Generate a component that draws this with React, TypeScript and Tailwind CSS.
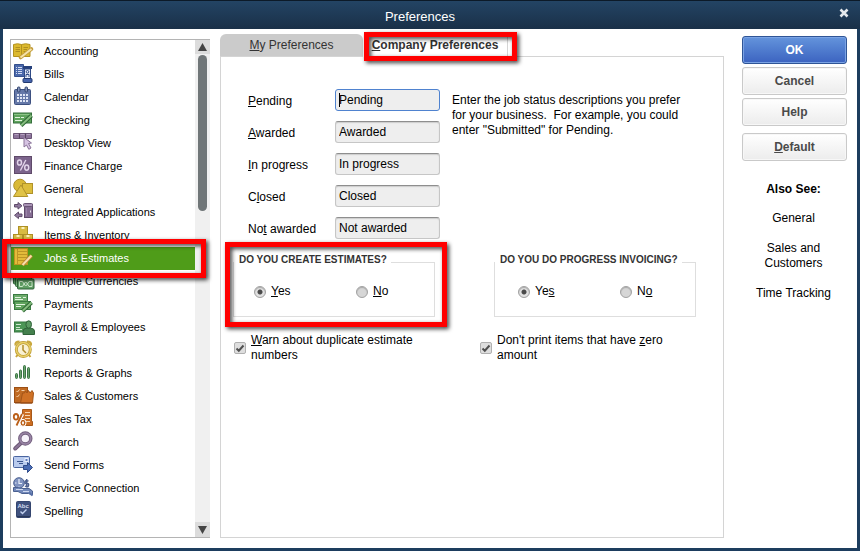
import { useState } from "react";
import type { ReactNode } from "react";

interface IconProps {
    children: ReactNode
}

function Icon(props: IconProps) {
    return (
        <svg viewBox="0 0 23 23" className="w-[23px] h-[23px] shrink-0" aria-hidden="true">
            {props.children}
        </svg>
    );
}

const icons: Record<string, ReactNode> = {
    accounting: (
        <>
            <path d="M1.5 4.5q4-1.5 8 0q4-1.5 8.5 0v12h-16.500z" fill="#dcb92f" stroke="#b3921f" />
            <path d="M9.5 4.500v12" stroke="#b3921f" />
            <path d="M3.500 7.500h4.500M3.500 9.500h4.500M3.500 11.500h4.500M11.500 7.500h4.500M11.500 9.500h3.500M11.500 11.500h2" stroke="#b08f20" />
            <path d="M19.500 9L8.500 17.500" stroke="#c39d3c" strokeWidth="3.600" strokeLinecap="round" />
            <path d="M19.500 9L8.500 17.500" stroke="#f5e3a8" strokeWidth="2" />
        </>
    ),
    bills: (
        <>
            <path d="M2.500 1.500h9v2h7v9h-5v1h-11z" fill="#4b69ab" stroke="#35508e" />
            <path d="M4 4.500h1M6 4.500h4M4 6.500h1M6 6.500h4M4 8.500h1M6 8.500h4M4 10.500h1M6 10.500h4" stroke="#d3dcf2" />
            <rect x="11" y="3" width="9" height="3" fill="#27417c" />
            <rect x="12.500" y="6" width="6" height="9.500" fill="#e6ecf8" stroke="#2f4a86" />
            <circle cx="15.500" cy="8.800" r="1.300" fill="none" stroke="#2f4a86" />
            <path d="M14 14v-2.500h3V14" fill="none" stroke="#2f4a86" />
            <rect x="11" y="15.500" width="9" height="4" rx="1" fill="#4664ac" stroke="#22396e" />
        </>
    ),
    calendar: (
        <>
            <rect x="2.500" y="3.500" width="16" height="15" rx="1" fill="#6578a8" stroke="#3d5080" />
            <rect x="5.500" y="1" width="2.500" height="5" rx="1" fill="#8595bd" stroke="#35476f" />
            <rect x="13" y="1" width="2.500" height="5" rx="1" fill="#8595bd" stroke="#35476f" />
            <path d="M5 9h12M5 12h12M5 15h12" stroke="#dfe5f4" strokeWidth="2" strokeDasharray="2 1" />
        </>
    ),
    checking: (
        <>
            <rect x="1.500" y="4" width="18" height="10" fill="#5fa35d" stroke="#356f3c" />
            <path d="M2 5.500h17" stroke="#8cc487" />
            <path d="M3 8.500h5M9 8.500h3M3 11.500h7" stroke="#e2f3df" />
            <path d="M19.500 6.500L9 16.500" stroke="#2c6634" strokeWidth="4" />
            <path d="M19.500 6.500L9 16.500" stroke="#86bd7e" strokeWidth="2" />
        </>
    ),
    desktop: (
        <>
            <path d="M1.500 1.500h18v5h-18z" fill="#8c749a" stroke="#6a5476" />
            <path d="M7.500 1.500v5M13.500 1.500v5" stroke="#57435f" />
            <path d="M2.500 2.500h4M8.500 2.500h4M14.500 2.500h4" stroke="#b5a1c0" />
            <path d="M12 5.500l7.500 5.500-3 .5 2.500 4.500-2.200 1.300-2.300-4.300L12 15z" fill="#d6c4e2" stroke="#8b7499" />
        </>
    ),
    finance: (
        <>
            <rect x="2.500" y="1.500" width="17" height="17" fill="#7c648c" stroke="#5f4a69" />
            <path d="M13.800 5L8.400 15.500" stroke="#e2d5ea" strokeWidth="1.400" />
            <ellipse cx="7.500" cy="7.500" rx="2" ry="2.600" fill="none" stroke="#e2d5ea" strokeWidth="1.500" />
            <ellipse cx="14.700" cy="12.600" rx="2" ry="2.600" fill="none" stroke="#e2d5ea" strokeWidth="1.500" />
        </>
    ),
    general: (
        <>
            <circle cx="8" cy="7.500" r="6.300" fill="#d9b936" stroke="#b0922a" />
            <rect x="10.500" y="5.500" width="10" height="10" fill="#dcbd3c" stroke="#b0922a" />
            <path d="M9 7l6.800 11.500H1.500z" fill="#e0c347" stroke="#b0922a" />
        </>
    ),
    integrated: (
        <>
            <path d="M2.500 3.500h3.500V1.500l4 3.300-4 3.300V6h-3.500z" fill="#8f799d" stroke="#5f4b69" />
            <path d="M10 13H6.500V11l-4 3.300 4 3.300v-2H10z" fill="#8f799d" stroke="#5f4b69" />
            <rect x="12.500" y="3.500" width="8" height="13" fill="#846c92" stroke="#5f4b69" />
            <rect x="11.500" y="2.500" width="9" height="3" rx="1" fill="#a893b4" stroke="#6a5475" />
            <path d="M14.500 7v8" stroke="#9a85a7" />
            <path d="M18.500 9.500v2" stroke="#e5dcea" />
        </>
    ),
    items: (
        <>
            <rect x="6.500" y="2.500" width="9" height="8" fill="#d8bb42" stroke="#ad9025" />
            <rect x="1.500" y="10.500" width="9" height="8" fill="#d8bb42" stroke="#ad9025" />
            <rect x="11.500" y="10.500" width="9" height="8" fill="#d8bb42" stroke="#ad9025" />
            <path d="M9.500 4h3M4.500 12h3M14.500 12h3" stroke="#fbf0bb" strokeWidth="2" />
        </>
    ),
    jobs: (
        <>
            <rect x="2.500" y="1.500" width="13" height="16" fill="#e3bb3a" stroke="#bd931f" />
            <path d="M5.500 2v15M6 4.500h9M6 7.500h9M6 10.500h9M6 13.500h7" stroke="#be9526" />
            <path d="M19.500 8.500l-9 9.500" stroke="#bb8631" strokeWidth="3.800" />
            <path d="M19.500 8.500l-9 9.500" stroke="#f8dfaa" strokeWidth="2" />
        </>
    ),
    currencies: (
        <>
            <rect x="1.500" y="4" width="16" height="10" rx="1" fill="#5b9a5e" stroke="#2f6238" />
            <rect x="3.500" y="6.500" width="16" height="10" rx="1" fill="#6fac6f" stroke="#2f6238" />
            <rect x="5.500" y="9" width="16.500" height="10" rx="1" fill="#5f9d63" stroke="#2f6238" />
            <path d="M7.500 11.500h3l1.500 2.500-1.500 2.500h-3zM20 11.500h-3l-1.500 2.500 1.500 2.500h3z" fill="none" stroke="#c9e4c7" />
            <circle cx="13.800" cy="14" r="1.500" fill="none" stroke="#c9e4c7" />
        </>
    ),
    payments: (
        <>
            <rect x="1.500" y="1.500" width="14" height="9" fill="#6cab6b" stroke="#3b7a42" />
            <path d="M3 4.500h6M11 4.500h3M3 6.500h8" stroke="#e1f2de" />
            <rect x="2.500" y="8.500" width="16" height="8" fill="#5fa35d" stroke="#3b7a42" />
            <path d="M4 11.500h9M4 13.500h5" stroke="#e1f2de" />
            <path d="M19.500 9.500L10.500 18" stroke="#2c6634" strokeWidth="4" />
            <path d="M19.500 9.500L10.500 18" stroke="#86bd7e" strokeWidth="2" />
        </>
    ),
    payroll: (
        <>
            <rect x="2.500" y="6" width="14" height="10" fill="#4c9656" stroke="#35763f" />
            <path d="M4 8.500h5M4 11.500h4M4 13.500h6" stroke="#cfe9cf" />
            <path d="M11 18.500v-3.500q0-2.500 4-3h3.500q4 .5 4 3v3.500z" fill="#44804d" stroke="#2f6238" />
            <ellipse cx="16.700" cy="8.500" rx="2.800" ry="3.700" fill="#5b9a62" stroke="#2f6238" />
        </>
    ),
    reminders: (
        <>
            <path d="M3.500 6.500q-1-4 4-4M19 6.500q1-4-4-4" fill="#e8cf62" stroke="#c9a73c" strokeWidth="2" />
            <path d="M5.500 16l-1.500 2M17 16l1.500 2" stroke="#c9a73c" strokeWidth="2" />
            <circle cx="11.300" cy="10.500" r="7" fill="#f9f1d2" stroke="#bc9a33" strokeWidth="3" />
            <circle cx="11.300" cy="10.500" r="7" fill="none" stroke="#e8cf66" strokeWidth="1.600" />
            <path d="M11 6v5l3 3" fill="none" stroke="#b08c2a" strokeWidth="1.500" />
        </>
    ),
    reports: (
        <>
            <rect x="3.500" y="11.500" width="2" height="5" rx="1" fill="#6ba36d" stroke="#3b7545" />
            <rect x="7.500" y="8" width="2" height="8.500" rx="1" fill="#6ba36d" stroke="#3b7545" />
            <rect x="11.500" y="3.500" width="2" height="13" rx="1" fill="#6ba36d" stroke="#3b7545" />
            <rect x="15.500" y="5.500" width="2" height="11" rx="1" fill="#6ba36d" stroke="#3b7545" />
        </>
    ),
    customers: (
        <>
            <rect x="2.500" y="2.500" width="13" height="15" fill="#c06a22" stroke="#9c5015" />
            <path d="M4.500 6l1 1 2-2.500M4.500 11l1 1 2-2.500" fill="none" stroke="#f5cfa6" />
            <path d="M9.500 5.500h3" stroke="#f5cfa6" />
            <path d="M8.500 18l2-10h2l1-2 1.500 2 1.500-2.500 1.500 2.500L20 5.500l1.500 2.500-1 10z" fill="#cf7125" stroke="#a35518" />
            <path d="M3 18h17" stroke="#8a4210" />
        </>
    ),
    tax: (
        <>
            <path d="M10.500 1.500h9v12h1v4h-10z" fill="#cc6e22" stroke="#a85819" />
            <path d="M13 4.500h5M13 7.500h5M13 10.500h5M14 13.500h4" stroke="#f7d6b0" />
            <path d="M10.500 6L4.500 17.500" stroke="#fff" strokeWidth="3.500" />
            <path d="M10 6L4.500 17.500" stroke="#bb6019" strokeWidth="1.800" />
            <ellipse cx="4" cy="8.800" rx="2.200" ry="2.800" fill="#fff" stroke="#bb6019" strokeWidth="1.800" />
            <ellipse cx="11" cy="14.800" rx="3" ry="3.500" fill="#bb6019" stroke="#fff" />
            <ellipse cx="11" cy="14.800" rx="1" ry="1.600" fill="#fff" />
        </>
    ),
    search: (
        <>
            <path d="M9 12l-5.800 5.500" stroke="#6c5876" strokeWidth="4" strokeLinecap="round" />
            <path d="M9 12l-5.800 5.500" stroke="#8d7898" strokeWidth="2" strokeLinecap="round" />
            <circle cx="13.300" cy="7.500" r="5.500" fill="#f6f2fa" stroke="#715d7c" strokeWidth="3.400" />
            <circle cx="13.300" cy="7.500" r="5.500" fill="none" stroke="#9884a4" strokeWidth="1.600" />
        </>
    ),
    send: (
        <>
            <rect x="1.500" y="2.500" width="16" height="11" rx="1" fill="#b9cbee" stroke="#4a659f" />
            <path d="M5 7.500h6M7 9.500h4" stroke="#3c568f" />
            <rect x="13" y="4.500" width="3" height="3" fill="#5e7cc0" stroke="#e9effb" />
            <path d="M11.500 11.500h4v-3l5 5-5 5v-3h-4z" fill="#4a6cb4" stroke="#2f4b8a" />
        </>
    ),
    service: (
        <>
            <circle cx="7" cy="6" r="5.300" fill="#8093c0" stroke="#4a6090" />
            <path d="M7 2v4.500h3M3 6h1.500M7 9.500v1" fill="none" stroke="#eaf0fb" strokeWidth="1.200" />
            <path d="M16.500 4q-3.500-1-3.500 1t2 1.500 1.500 2-3.500 .5M14.700 2v8.500" fill="none" stroke="#4c5f8e" strokeWidth="1.500" />
            <path d="M1.500 10.500h5l3 1h7.500l3.500 2.500v4l-4-1.500H10l-4-2H1.500z" fill="#7389ba" stroke="#4a6090" />
            <path d="M4 12.500h7M11 14.500h6" stroke="#cfdaf0" />
            <path d="M17 15.500l3.500 3" stroke="#5871a8" strokeWidth="2" />
        </>
    ),
    spelling: (
        <>
            <rect x="4.500" y="1.500" width="14" height="16" rx="1" fill="#40527e" stroke="#34456e" />
            <path d="M5 16.500h13" stroke="#2a3858" />
            <text x="5.500" y="7.500" fontSize="6" fontFamily="Liberation Sans, sans-serif" fontWeight="bold" fill="#d5ddf0">Abc</text>
            <path d="M8.500 11.500l2 2 4-4" fill="none" stroke="#c3d2f0" strokeWidth="1.400" />
        </>
    ),
};

const categories = [
    { icon: "accounting", name: "Accounting" },
    { icon: "bills", name: "Bills" },
    { icon: "calendar", name: "Calendar" },
    { icon: "checking", name: "Checking" },
    { icon: "desktop", name: "Desktop View" },
    { icon: "finance", name: "Finance Charge" },
    { icon: "general", name: "General" },
    { icon: "integrated", name: "Integrated Applications" },
    { icon: "items", name: "Items & Inventory" },
    { icon: "jobs", name: "Jobs & Estimates" },
    { icon: "currencies", name: "Multiple Currencies" },
    { icon: "payments", name: "Payments" },
    { icon: "payroll", name: "Payroll & Employees" },
    { icon: "reminders", name: "Reminders" },
    { icon: "reports", name: "Reports & Graphs" },
    { icon: "customers", name: "Sales & Customers" },
    { icon: "tax", name: "Sales Tax" },
    { icon: "search", name: "Search" },
    { icon: "send", name: "Send Forms" },
    { icon: "service", name: "Service Connection" },
    { icon: "spelling", name: "Spelling" },
];

interface HighlightProps {
    className: string
}

// red callout frame with its drop shadow
function Highlight(props: HighlightProps) {
    return (
        <div className={"absolute z-10 pointer-events-none border-[#ff0000] drop-shadow-[2px_2px_2px_rgba(0,0,0,0.75)] " + props.className}></div>
    );
}

function TitleBar() {
    return (
        <header className="relative flex items-center justify-center h-[29px] pt-1 pr-5 border-t border-[#0c1a28] bg-linear-to-b from-[#234464] to-[#1a3048]">
            <h1 className="text-[13px] leading-4 text-white">Preferences</h1>
            <button aria-label="Close" className="absolute right-3 top-2 w-2 h-2">
                <svg viewBox="0 0 8 8" className="w-2 h-2 overflow-visible">
                    <path d="M0.500 0.500l7 7M7.500 0.500l-7 7" stroke="#e4e8ec" strokeWidth="2.600" />
                </svg>
            </button>
        </header>
    );
}

function Sidebar() {
    const [selected, setSelected] = useState("Jobs & Estimates");

    return (
        <nav className="relative flex w-[200px] shrink-0 mt-[5px] border border-r-0 border-[#b4b4b4]">
            <ul className="flex-1">
                {categories.map((item) => (
                    <li key={item.name} className="relative">
                        <button
                            onClick={() => setSelected(item.name)}
                            className={"flex items-center w-full h-[23px] pl-px gap-[9px] text-[11px] text-left whitespace-nowrap " + (item.name === selected ? "bg-[#4f9c19] text-white" : "text-black")}
                        >
                            <Icon>{icons[item.icon]}</Icon>
                            {item.name}
                        </button>
                        {item.name === "Jobs & Estimates" && <Highlight className="border-5 -left-[9px] -right-[11px] -top-2 -bottom-2" />}
                    </li>
                ))}
            </ul>
            {/* scrollbar */}
            <div className="flex flex-col w-[15px] bg-[#f0f0f0]">
                <div className="flex items-center justify-center h-[14px] bg-[#dcdcdc]">
                    <svg viewBox="0 0 9 8" className="w-[9px] h-2"><path d="M4.500 0L9 8H0z" fill="#444" /></svg>
                </div>
                <div className="flex-1 px-[3px] pt-px">
                    <div className="h-1/3 rounded-full bg-[#707678]"></div>
                </div>
                <div className="flex items-center justify-center h-[15px] bg-[#dcdcdc]">
                    <svg viewBox="0 0 9 8" className="w-[9px] h-2"><path d="M4.500 8L9 0H0z" fill="#444" /></svg>
                </div>
            </div>
        </nav>
    );
}

function Tabs() {
    return (
        <div role="tablist" className="flex h-[22px] text-xs">
            <button role="tab" aria-selected="false" className="w-[143px] rounded-t-md bg-[#cbcbcb] text-[#333]"><u>M</u>y Preferences</button>
            <div className="relative">
                <button role="tab" aria-selected="true" className="relative w-[145px] h-[23px] pb-px bg-white border-r border-[#d4d4d4] font-bold text-[#333] whitespace-nowrap"><u>C</u>ompany Preferences</button>
                <Highlight className="border-5 left-px -right-[9px] -top-[2px] -bottom-[5px]" />
            </div>
        </div>
    );
}

const statuses = [
    { id: "pending", label: <><u>P</u>ending</>, value: "Pending" },
    { id: "awarded", label: <><u>A</u>warded</>, value: "Awarded" },
    { id: "progress", label: <><u>I</u>n progress</>, value: "In progress" },
    { id: "closed", label: <>C<u>l</u>osed</>, value: "Closed" },
    { id: "notawarded", label: <>No<u>t</u> awarded</>, value: "Not awarded" },
];

function StatusFields() {
    return (
        <div className="flex gap-3 pl-[27px]">
            <div className="flex flex-col gap-[10px]">
                {statuses.map((status) => (
                    <div key={status.id} className="flex items-center">
                        <label htmlFor={status.id} className="w-[87px] pt-[2px]">{status.label}</label>
                        <div className="relative">
                            <input
                                id={status.id}
                                type="text"
                                defaultValue={status.value}
                                className={"block w-[105px] h-[22px] px-[3px] pb-px rounded-[3px] border bg-[#eeeeee] outline-none " + (status.id === "pending" ? "border-[#4f82cf]" : "border-[#c6c6c6] border-t-[#8e8e8e] shadow-[inset_0_1px_1px_#cccccc]")}
                            />
                            {/* caret */}
                            {status.id === "pending" && <span className="absolute left-1 top-1 w-px h-[14px] bg-black"></span>}
                        </div>
                    </div>
                ))}
            </div>
            <p className="w-[244px] pt-1">
                Enter the job status descriptions you prefer for your business.&nbsp; For example, you could enter "Submitted" for Pending.
            </p>
        </div>
    );
}

interface RadioProps {
    name: string
    value: string
    checked?: boolean
    children: ReactNode
}

function Radio(props: RadioProps) {
    return (
        <label className="flex items-center gap-[5px]">
            <input
                type="radio"
                name={props.name}
                value={props.value}
                defaultChecked={props.checked}
                className="appearance-none w-3 h-3 rounded-full border border-[#a2a2a2] bg-[#d6d6d6] shadow-[inset_0_1px_1px_#aaaaaa] checked:bg-[radial-gradient(circle,#4a4a4a_0_2px,#e2e2e2_3px)]"
            />
            <span>{props.children}</span>
        </label>
    );
}

interface CheckProps {
    children: ReactNode
}

function Check(props: CheckProps) {
    return (
        <label className="flex items-center gap-[5px]">
            <span className="relative w-3 h-3 shrink-0">
                <input type="checkbox" defaultChecked className="peer block appearance-none w-3 h-3 rounded-[2px] border border-[#b0b0b0] bg-[#dedede]" />
                <svg viewBox="0 0 12 12" className="absolute inset-0 w-3 h-3 pointer-events-none hidden peer-checked:block">
                    <path d="M2.500 6.500l2.300 2.200L9.500 3.500" fill="none" stroke="#505050" strokeWidth="2" />
                </svg>
            </span>
            <span className="w-[180px]">{props.children}</span>
        </label>
    );
}

function Groups() {
    return (
        <>
            <div className="grid grid-cols-2 gap-[59px] pl-3 pr-[27px] mt-[15px]">
                <div className="relative min-w-0">
                    <fieldset className="min-w-0 h-[63px] px-5 border border-[#dedede]">
                        <legend className="h-4 -ml-5 pl-[5px] pr-1 text-[10px] leading-3 font-bold text-[#333] whitespace-nowrap">DO YOU CREATE ESTIMATES?</legend>
                        <div className="grid grid-cols-[102px_1fr] pt-[14px]">
                            <Radio name="estimates" value="yes" checked><u>Y</u>es</Radio>
                            <Radio name="estimates" value="no"><u>N</u>o</Radio>
                        </div>
                    </fieldset>
                    <Highlight className="border-5 -left-2 -right-3 -top-3 -bottom-[10px]" />
                </div>
                <fieldset className="min-w-0 h-[63px] px-[23px] border border-[#dedede]">
                    <legend className="h-4 -ml-[23px] pl-[5px] pr-1 text-[10px] leading-3 font-bold text-[#333] whitespace-nowrap">DO YOU DO PROGRESS INVOICING?</legend>
                    <div className="grid grid-cols-[102px_1fr] pt-[14px]">
                        <Radio name="invoicing" value="yes" checked>Ye<u>s</u></Radio>
                        <Radio name="invoicing" value="no">N<u>o</u></Radio>
                    </div>
                </fieldset>
            </div>
            <div className="grid grid-cols-2 gap-[3px] pl-[13px] mt-4">
                <Check><u>W</u>arn about duplicate estimate numbers</Check>
                <Check>Don't print items that have <u>z</u>ero amount</Check>
            </div>
        </>
    );
}

function Actions() {
    const plain = "block w-full h-7 rounded-[3px] border border-[#c9c9c9] bg-linear-to-b from-white to-[#ececec] text-[#4a4a4a] shadow-[inset_0_0_0_1px_#f7f7f7]";

    return (
        <aside className="w-[105px] shrink-0 mt-[2px] text-center leading-[15px]">
            <div className="flex flex-col gap-[3px] font-bold">
                <button className="block w-full h-7 rounded-[3px] border border-[#2f5596] bg-linear-to-b from-[#6494dc] to-[#3c63c0] text-white shadow-[inset_0_0_0_1px_#7ba3e4]">OK</button>
                <button className={plain}>Cancel</button>
                <button className={plain}>Help</button>
                <button className={plain + " mt-1"}><u>D</u>efault</button>
            </div>
            <h2 className="mt-[21px] pr-[2px] font-bold">Also See:</h2>
            <div className="flex flex-col gap-[15px] mt-[14px] pr-[2px]">
                <a href="#">General</a>
                <a href="#">Sales and<br />Customers</a>
                <a href="#">Time Tracking</a>
            </div>
        </aside>
    );
}

export default function App() {
    return (
        <div className="flex flex-col min-h-screen bg-white font-['Liberation_Sans',Arial,sans-serif] text-xs text-black">
            <TitleBar />
            <div className="flex flex-1 pt-[5px] pb-[10px] pl-[7px] pr-[10px] border-x-3 border-b-3 border-[#1d3d5e]">
                <Sidebar />
                <main className="flex flex-col flex-1 ml-[10px] mr-[18px] leading-[15px]">
                    <Tabs />
                    <div role="tabpanel" className="flex-1 pt-8 border border-[#d4d4d4]">
                        <StatusFields />
                        <Groups />
                    </div>
                </main>
                <Actions />
            </div>
        </div>
    );
}
